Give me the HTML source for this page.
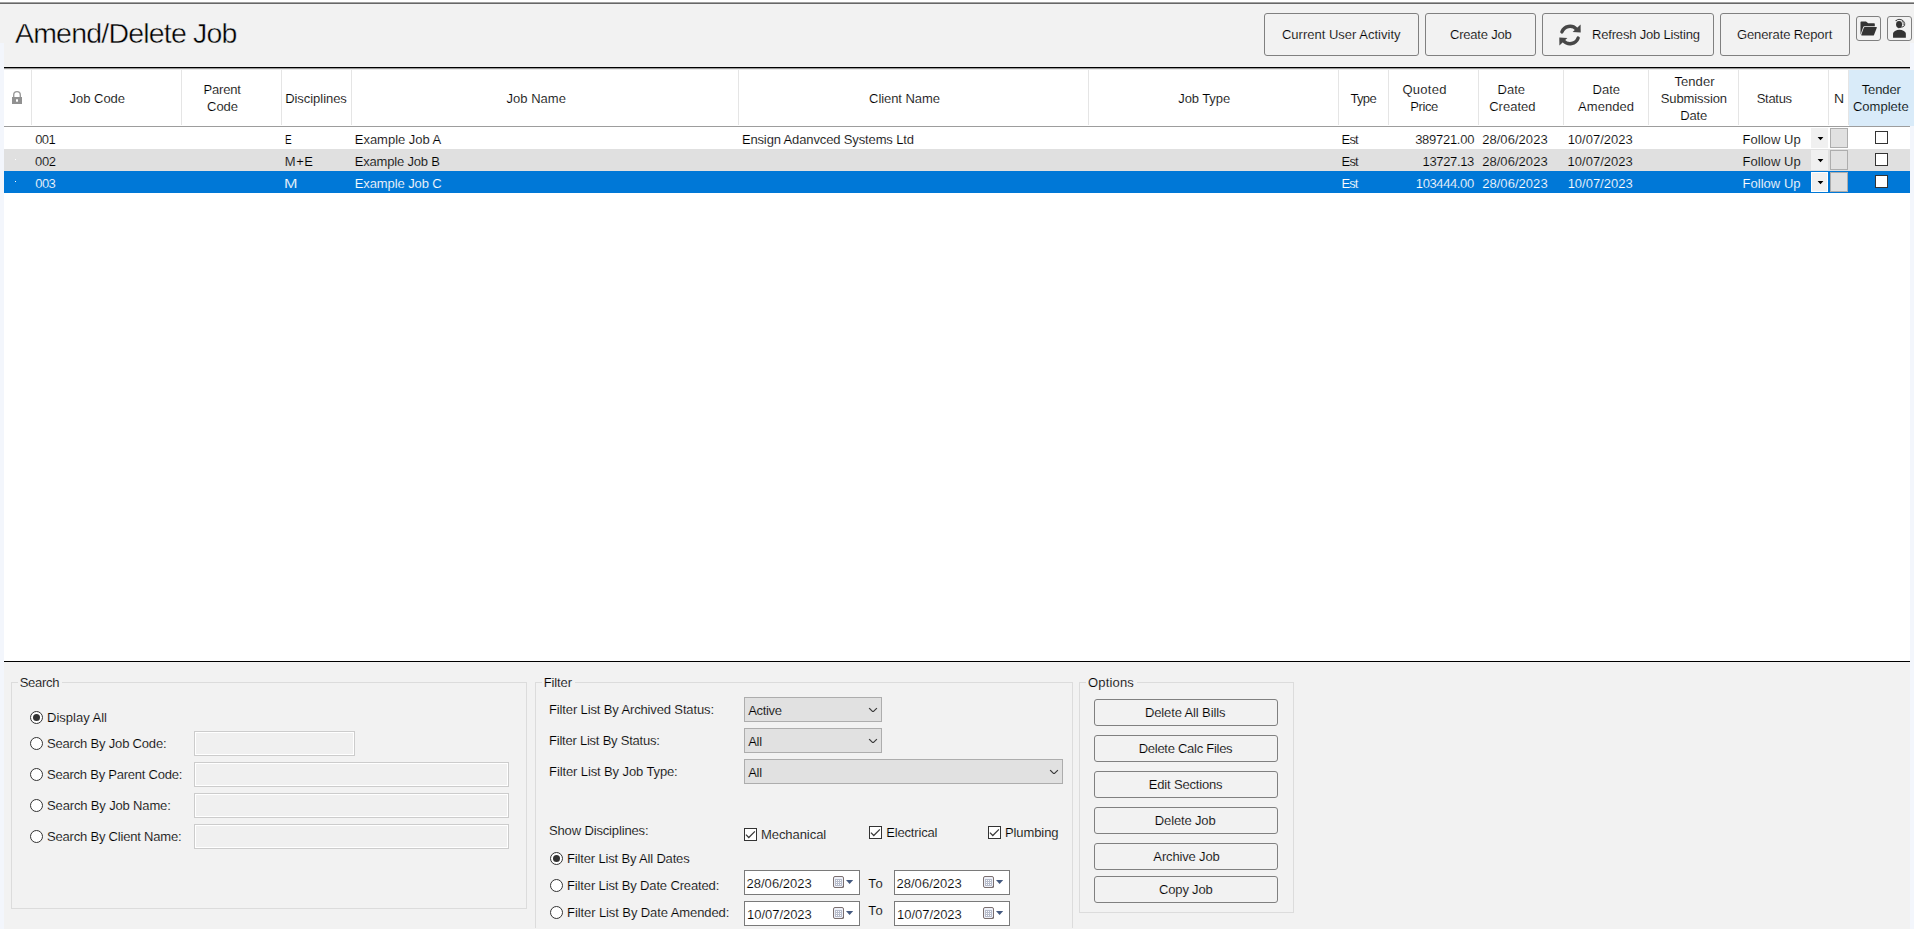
<!DOCTYPE html>
<html>
<head>
<meta charset="utf-8">
<title>Amend/Delete Job</title>
<style>
*{box-sizing:border-box;margin:0;padding:0}
html,body{width:1914px;height:929px;overflow:hidden}
body{position:relative;background:#f2f2f2;font-family:"Liberation Sans",sans-serif;font-size:13px;color:#000}
.a{position:absolute}
.t{position:absolute;white-space:nowrap;font-family:"Liberation Sans",sans-serif}
.btn{position:absolute;border:1px solid #808080;border-radius:3px;background:#f2f2f2}
.sep{position:absolute;top:70px;width:1px;height:55px;background:#e5e5e5}
.gb{position:absolute;border:1px solid #dcdcdc}
.gap{position:absolute;height:3px;background:#f2f2f2}
.inp{position:absolute;height:25px;border:1px solid #cccccc;background:#f0f0f0;box-shadow:inset 0 0 0 1px #fff}
.cmb{position:absolute;height:25px;border:1px solid #adadad;background:#e1e1e1}
.dp{position:absolute;width:116px;height:25px;border:1px solid #7a7a7a;background:#fff}
.rad{position:absolute;width:13px;height:13px;border:1px solid #333;border-radius:50%;background:#fff}
.rad.on::after{content:"";position:absolute;left:2px;top:2px;width:7px;height:7px;border-radius:50%;background:#333}
.chk{position:absolute;width:13px;height:13px;border:1px solid #333;background:#fff}
.dd{position:absolute;left:1811px;width:17px;height:20px;background:#f0f0f0}
.nb{position:absolute;left:1830px;width:18px;height:20px;background:#e1e1e1;border:1px solid #adadad}
svg{position:absolute;overflow:visible}
</style>
</head>
<body>
<!-- window top edge -->
<div class="a" style="left:0;top:0;width:1914px;height:2px;background:#fff"></div>
<div class="a" style="left:0;top:2px;width:1914px;height:1px;background:#a0a0a0"></div>
<div class="a" style="left:0;top:3px;width:1914px;height:1px;background:#676767"></div>
<!-- side strips -->
<div class="a" style="left:0;top:43px;width:4px;height:886px;background:#f3f6fc"></div>
<div class="a" style="left:1910px;top:43px;width:4px;height:886px;background:#f3f6fc"></div>

<!-- top buttons -->
<div class="btn" style="left:1264px;top:13px;width:155px;height:43px"></div>
<div class="btn" style="left:1425px;top:13px;width:111px;height:43px"></div>
<div class="btn" style="left:1542px;top:13px;width:172px;height:43px"></div>
<div class="btn" style="left:1720px;top:13px;width:130px;height:43px"></div>
<div class="btn" style="left:1856px;top:16px;width:25px;height:25px"></div>
<div class="btn" style="left:1887px;top:16px;width:25px;height:25px"></div>

<!-- refresh icon -->
<svg style="left:1558px;top:22.5px" width="24" height="24" viewBox="-12 -12 24 24">
 <g fill="none" stroke="#474747" stroke-width="3.4" stroke-linecap="round">
  <path d="M-8.1,-3.1 A8.7,8.7 0 0 1 6.4,-5.9"/>
  <path d="M8.1,3.1 A8.7,8.7 0 0 1 -6.4,5.9"/>
 </g>
 <g fill="#474747">
  <path d="M10.6,-10.6 L10.7,-2.5 L2.6,-2.9 Z"/>
  <path d="M-10.6,10.6 L-10.7,2.5 L-2.6,2.9 Z"/>
 </g>
</svg>
<!-- folder icon -->
<svg style="left:1856px;top:16px" width="25" height="25" viewBox="0 0 25 25">
 <path fill="#333" d="M4.5,6.2 Q4.5,5.4 5.3,5.4 L10,5.4 L12.2,7.35 L18.2,7.35 Q18.8,7.35 18.8,7.95 L18.8,10.15 L8.4,10.15 Q7.5,10.15 7.2,11 L4.5,18.7 Z"/>
 <path fill="#333" d="M8.7,11 L20.3,11 Q21.1,11 20.8,11.8 L18,19 Q17.8,19.6 17.1,19.6 L5.8,19.6 Q5,19.6 5.3,18.8 L7.9,11.6 Q8.1,11 8.7,11 Z"/>
</svg>
<!-- user icon -->
<svg style="left:1887px;top:16px" width="25" height="25" viewBox="0 0 25 25">
 <ellipse cx="12.05" cy="8.5" rx="3" ry="3.4" fill="#333"/>
 <path fill="#333" d="M11.2,11.5 L12.9,11.5 L11.8,12.6 Z"/>
 <path fill="#333" d="M6.05,21.8 L6.05,17.6 Q6.05,16 8,15 Q10.2,13.85 12.45,13.85 Q14.7,13.85 16.9,15 Q18.85,16 18.85,17.6 L18.85,21.8 Z"/>
 <path fill="none" stroke="#333" stroke-width="0.9" d="M9.1,4.6 Q10,3.5 12,3.35 Q15,3.2 16.6,5.2 Q18.3,7.6 17.6,9.6 Q16.5,11.2 13,11.3"/>
 <path fill="none" stroke="#333" stroke-width="0.6" d="M14.9,4.6 Q16.7,6.4 16.3,9.3"/>
 <circle cx="9.1" cy="4.6" r="0.7" fill="#333"/>
</svg>

<!-- table -->
<div class="a" style="left:4px;top:67px;width:1906px;height:595px;background:#fff;border-top:1px solid #000;border-bottom:1px solid #000"></div>
<div class="a" style="left:4px;top:68px;width:1906px;height:1px;background:#999"></div>
<div class="a" style="left:4px;top:69px;width:1906px;height:1px;background:#ebebeb"></div>
<div class="a" style="left:1849px;top:70px;width:65px;height:56px;background:#d9ebf9"></div>
<div class="sep" style="left:31px"></div>
<div class="sep" style="left:181px"></div>
<div class="sep" style="left:281px"></div>
<div class="sep" style="left:351px"></div>
<div class="sep" style="left:738px"></div>
<div class="sep" style="left:1088px"></div>
<div class="sep" style="left:1338px"></div>
<div class="sep" style="left:1388px"></div>
<div class="sep" style="left:1478px"></div>
<div class="sep" style="left:1563px"></div>
<div class="sep" style="left:1648px"></div>
<div class="sep" style="left:1738px"></div>
<div class="sep" style="left:1828px"></div>
<div class="sep" style="left:1848px"></div>
<div class="a" style="left:4px;top:126px;width:1906px;height:1px;background:#9d9d9d"></div>
<!-- rows -->
<div class="a" style="left:4px;top:149px;width:1906px;height:22px;background:#e0e0e0"></div>
<div class="a" style="left:4px;top:171px;width:1906px;height:22px;background:#0078d7"></div>
<!-- lock icon -->
<svg style="left:10px;top:89px" width="14" height="17" viewBox="0 0 14 17">
 <path fill="none" stroke="#9a9a9a" stroke-width="1.4" d="M3.7,8.5 L3.7,6 A3.3,3.4 0 0 1 10.3,6 L10.3,8.5"/>
 <rect x="2" y="8" width="10" height="7" fill="#919191"/>
 <rect x="6" y="10.3" width="2" height="2.4" fill="#fff"/>
</svg>
<!-- row widgets -->
<div class="dd" style="top:128px"></div><div class="nb" style="top:128px"></div><div class="chk" style="left:1875px;top:131px"></div>
<div class="dd" style="top:150px"></div><div class="nb" style="top:150px"></div><div class="chk" style="left:1875px;top:153px"></div>
<div class="dd" style="top:172px;border:1px solid #fff"></div><div class="nb" style="top:172px"></div><div class="chk" style="left:1875px;top:175px"></div>
<svg style="left:1811px;top:128px" width="17" height="64" viewBox="0 0 17 64">
 <path fill="#000" d="M6.6,9 L12.4,9 L9.5,12.2 Z M6.6,31 L12.4,31 L9.5,34.2 Z M6.6,53 L12.4,53 L9.5,56.2 Z"/>
</svg>
<div class="a" style="left:15px;top:159px;width:1px;height:1px;background:#fff"></div>
<div class="a" style="left:15px;top:181px;width:1px;height:1px;background:#fff"></div>

<!-- group boxes -->
<div class="gb" style="left:11px;top:682px;width:516px;height:227px"></div>
<div class="gap" style="left:18px;top:681px;width:44px"></div>
<div class="gb" style="left:535px;top:682px;width:538px;height:246px;border-bottom:none"></div>
<div class="gap" style="left:542px;top:681px;width:33px"></div>
<div class="gb" style="left:1079px;top:682px;width:215px;height:231px"></div>
<div class="gap" style="left:1086px;top:681px;width:51px"></div>

<!-- search panel -->
<div class="rad on" style="left:30px;top:711px"></div>
<div class="rad" style="left:30px;top:737px"></div>
<div class="rad" style="left:30px;top:768px"></div>
<div class="rad" style="left:30px;top:799px"></div>
<div class="rad" style="left:30px;top:830px"></div>
<div class="inp" style="left:194px;top:731px;width:161px"></div>
<div class="inp" style="left:194px;top:762px;width:315px"></div>
<div class="inp" style="left:194px;top:793px;width:315px"></div>
<div class="inp" style="left:194px;top:824px;width:315px"></div>

<!-- filter panel -->
<div class="cmb" style="left:744px;top:697px;width:138px"></div>
<div class="cmb" style="left:744px;top:728px;width:138px"></div>
<div class="cmb" style="left:744px;top:759px;width:319px"></div>
<svg style="left:0;top:0" width="1914" height="929" viewBox="0 0 1914 929">
 <g fill="none" stroke="#3c3c3c" stroke-width="1.15" stroke-linecap="square">
  <path d="M869.5,708.5 L872.5,711.5 L873.5,711.5 L876.5,708.5"/>
  <path d="M869.5,739.5 L872.5,742.5 L873.5,742.5 L876.5,739.5"/>
  <path d="M1050.5,770.5 L1053.5,773.5 L1054.5,773.5 L1057.5,770.5"/>
 </g>
</svg>
<div class="chk" style="left:744px;top:828px"></div>
<div class="chk" style="left:869px;top:826px"></div>
<div class="chk" style="left:988px;top:826px"></div>
<svg style="left:0;top:0" width="1914" height="929" viewBox="0 0 1914 929">
 <g fill="none" stroke="#3a3a3a" stroke-width="1.25">
  <path d="M745.9,834.6 L748.8,837.5 L754.9,831.4"/>
  <path d="M870.9,832.6 L873.8,835.5 L879.9,829.4"/>
  <path d="M989.9,832.6 L992.8,835.5 L998.9,829.4"/>
 </g>
</svg>
<div class="rad on" style="left:550px;top:852px"></div>
<div class="rad" style="left:550px;top:879px"></div>
<div class="rad" style="left:550px;top:906px"></div>
<div class="dp" style="left:744px;top:870px"></div>
<div class="dp" style="left:894px;top:870px"></div>
<div class="dp" style="left:744px;top:901px"></div>
<div class="dp" style="left:894px;top:901px"></div>
<!-- calendar icons -->
<svg style="left:0;top:0" width="1914" height="929" viewBox="0 0 1914 929">
 <g transform="translate(833,876)">
   <rect x="0.5" y="0.5" width="10" height="11" rx="1.5" fill="#edf0f8" stroke="#7b6f6f" stroke-width="1"/>
   <rect x="2" y="3" width="7" height="7" fill="#b7bccb"/>
   <path fill="#fff" d="M3,4h1v1h-1z M5,4h1v1h-1z M7,4h1v1h-1z M3,6h1v1h-1z M5,6h1v1h-1z M7,6h1v1h-1z M3,8h1v1h-1z M5,8h1v1h-1z M7,8h1v1h-1z"/>
   <path fill="#6e6464" d="M8.6,11.5 L11,9.2 L11,11 Q11,11.5 10.4,11.5 Z"/>
   <path fill="#44597f" d="M13,4 L20.2,4 L16.6,8 Z"/>
 </g>
 <g transform="translate(983,876)">
   <rect x="0.5" y="0.5" width="10" height="11" rx="1.5" fill="#edf0f8" stroke="#7b6f6f" stroke-width="1"/>
   <rect x="2" y="3" width="7" height="7" fill="#b7bccb"/>
   <path fill="#fff" d="M3,4h1v1h-1z M5,4h1v1h-1z M7,4h1v1h-1z M3,6h1v1h-1z M5,6h1v1h-1z M7,6h1v1h-1z M3,8h1v1h-1z M5,8h1v1h-1z M7,8h1v1h-1z"/>
   <path fill="#6e6464" d="M8.6,11.5 L11,9.2 L11,11 Q11,11.5 10.4,11.5 Z"/>
   <path fill="#44597f" d="M13,4 L20.2,4 L16.6,8 Z"/>
 </g>
 <g transform="translate(833,907)">
   <rect x="0.5" y="0.5" width="10" height="11" rx="1.5" fill="#edf0f8" stroke="#7b6f6f" stroke-width="1"/>
   <rect x="2" y="3" width="7" height="7" fill="#b7bccb"/>
   <path fill="#fff" d="M3,4h1v1h-1z M5,4h1v1h-1z M7,4h1v1h-1z M3,6h1v1h-1z M5,6h1v1h-1z M7,6h1v1h-1z M3,8h1v1h-1z M5,8h1v1h-1z M7,8h1v1h-1z"/>
   <path fill="#6e6464" d="M8.6,11.5 L11,9.2 L11,11 Q11,11.5 10.4,11.5 Z"/>
   <path fill="#44597f" d="M13,4 L20.2,4 L16.6,8 Z"/>
 </g>
 <g transform="translate(983,907)">
   <rect x="0.5" y="0.5" width="10" height="11" rx="1.5" fill="#edf0f8" stroke="#7b6f6f" stroke-width="1"/>
   <rect x="2" y="3" width="7" height="7" fill="#b7bccb"/>
   <path fill="#fff" d="M3,4h1v1h-1z M5,4h1v1h-1z M7,4h1v1h-1z M3,6h1v1h-1z M5,6h1v1h-1z M7,6h1v1h-1z M3,8h1v1h-1z M5,8h1v1h-1z M7,8h1v1h-1z"/>
   <path fill="#6e6464" d="M8.6,11.5 L11,9.2 L11,11 Q11,11.5 10.4,11.5 Z"/>
   <path fill="#44597f" d="M13,4 L20.2,4 L16.6,8 Z"/>
 </g>
</svg>

<!-- options panel -->
<div class="btn" style="left:1094px;top:699px;width:184px;height:27px"></div>
<div class="btn" style="left:1094px;top:735px;width:184px;height:27px"></div>
<div class="btn" style="left:1094px;top:771px;width:184px;height:27px"></div>
<div class="btn" style="left:1094px;top:807px;width:184px;height:27px"></div>
<div class="btn" style="left:1094px;top:843px;width:184px;height:27px"></div>
<div class="btn" style="left:1094px;top:876px;width:184px;height:27px"></div>

<!-- texts -->
<span class="t" style="left:14.97px;top:19.07px;font-size:28.5px;line-height:28.5px;letter-spacing:-0.798px;color:#000;-webkit-text-stroke:0.45px #f2f2f2">Amend/Delete Job</span>
<span class="t" style="left:1281.97px;top:28.00px;font-size:13px;line-height:13px;letter-spacing:0.004px;color:#000;-webkit-text-stroke:0.15px #f2f2f2">Current User Activity</span>
<span class="t" style="left:1450.01px;top:28.00px;font-size:13px;line-height:13px;letter-spacing:-0.214px;color:#000;-webkit-text-stroke:0.15px #f2f2f2">Create Job</span>
<span class="t" style="left:1592.06px;top:28.00px;font-size:13px;line-height:13px;letter-spacing:-0.187px;color:#000;-webkit-text-stroke:0.15px #f2f2f2">Refresh Job Listing</span>
<span class="t" style="left:1736.96px;top:28.00px;font-size:13px;line-height:13px;letter-spacing:-0.107px;color:#000;-webkit-text-stroke:0.15px #f2f2f2">Generate Report</span>
<span class="t" style="left:69.40px;top:92.00px;font-size:13px;line-height:13px;letter-spacing:0.006px;color:#000;-webkit-text-stroke:0.15px #ffffff">Job Code</span>
<span class="t" style="left:203.53px;top:83.00px;font-size:13px;line-height:13px;letter-spacing:-0.200px;color:#000;-webkit-text-stroke:0.15px #ffffff">Parent</span>
<span class="t" style="left:207.11px;top:100.00px;font-size:13px;line-height:13px;letter-spacing:-0.101px;color:#000;-webkit-text-stroke:0.15px #ffffff">Code</span>
<span class="t" style="left:285.13px;top:92.00px;font-size:13px;line-height:13px;letter-spacing:-0.039px;color:#000;-webkit-text-stroke:0.15px #ffffff">Disciplines</span>
<span class="t" style="left:506.51px;top:92.00px;font-size:13px;line-height:13px;letter-spacing:0.030px;color:#000;-webkit-text-stroke:0.15px #ffffff">Job Name</span>
<span class="t" style="left:869.11px;top:92.00px;font-size:13px;line-height:13px;letter-spacing:-0.075px;color:#000;-webkit-text-stroke:0.15px #ffffff">Client Name</span>
<span class="t" style="left:1178.26px;top:92.00px;font-size:13px;line-height:13px;letter-spacing:-0.088px;color:#000;-webkit-text-stroke:0.15px #ffffff">Job Type</span>
<span class="t" style="left:1350.55px;top:92.00px;font-size:13px;line-height:13px;letter-spacing:-0.706px;color:#000;-webkit-text-stroke:0.15px #ffffff">Type</span>
<span class="t" style="left:1402.44px;top:83.00px;font-size:13px;line-height:13px;letter-spacing:0.257px;color:#000;-webkit-text-stroke:0.15px #ffffff">Quoted</span>
<span class="t" style="left:1410.14px;top:100.00px;font-size:13px;line-height:13px;letter-spacing:-0.370px;color:#000;-webkit-text-stroke:0.15px #ffffff">Price</span>
<span class="t" style="left:1497.56px;top:83.00px;font-size:13px;line-height:13px;letter-spacing:0.025px;color:#000;-webkit-text-stroke:0.15px #ffffff">Date</span>
<span class="t" style="left:1489.21px;top:100.00px;font-size:13px;line-height:13px;letter-spacing:0.001px;color:#000;-webkit-text-stroke:0.15px #ffffff">Created</span>
<span class="t" style="left:1592.56px;top:83.00px;font-size:13px;line-height:13px;letter-spacing:0.025px;color:#000;-webkit-text-stroke:0.15px #ffffff">Date</span>
<span class="t" style="left:1578.09px;top:100.00px;font-size:13px;line-height:13px;letter-spacing:0.039px;color:#000;-webkit-text-stroke:0.15px #ffffff">Amended</span>
<span class="t" style="left:1674.55px;top:75.00px;font-size:13px;line-height:13px;letter-spacing:0.037px;color:#000;-webkit-text-stroke:0.15px #ffffff">Tender</span>
<span class="t" style="left:1660.73px;top:92.00px;font-size:13px;line-height:13px;letter-spacing:-0.097px;color:#000;-webkit-text-stroke:0.15px #ffffff">Submission</span>
<span class="t" style="left:1680.22px;top:109.00px;font-size:13px;line-height:13px;letter-spacing:-0.182px;color:#000;-webkit-text-stroke:0.15px #ffffff">Date</span>
<span class="t" style="left:1756.76px;top:92.00px;font-size:13px;line-height:13px;letter-spacing:-0.298px;color:#000;-webkit-text-stroke:0.15px #ffffff">Status</span>
<span class="t" style="left:1833.62px;top:92.00px;font-size:13px;line-height:13px;letter-spacing:0.000px;color:#000;-webkit-text-stroke:0.15px #ffffff;transform-origin:0 0;transform:scaleX(1.075)">N</span>
<span class="t" style="left:1861.66px;top:83.00px;font-size:13px;line-height:13px;letter-spacing:-0.103px;color:#000;-webkit-text-stroke:0.15px #d9ebf9">Tender</span>
<span class="t" style="left:1852.89px;top:100.00px;font-size:13px;line-height:13px;letter-spacing:0.031px;color:#000;-webkit-text-stroke:0.15px #d9ebf9">Complete</span>
<span class="t" style="left:35.13px;top:133.00px;font-size:13px;line-height:13px;letter-spacing:-0.599px;color:#000;-webkit-text-stroke:0.15px #ffffff">001</span>
<span class="t" style="left:284.73px;top:133.00px;font-size:13px;line-height:13px;letter-spacing:0.000px;color:#000;-webkit-text-stroke:0.15px #ffffff;transform-origin:0 0;transform:scaleX(0.775)">E</span>
<span class="t" style="left:354.81px;top:133.00px;font-size:13px;line-height:13px;letter-spacing:-0.026px;color:#000;-webkit-text-stroke:0.15px #ffffff">Example Job A</span>
<span class="t" style="left:741.88px;top:133.00px;font-size:13px;line-height:13px;letter-spacing:-0.134px;color:#000;-webkit-text-stroke:0.15px #ffffff">Ensign Adanvced Systems Ltd</span>
<span class="t" style="left:1341.53px;top:133.00px;font-size:13px;line-height:13px;letter-spacing:-0.787px;color:#000;-webkit-text-stroke:0.15px #ffffff">Est</span>
<span class="t" style="left:1415.15px;top:133.00px;font-size:13px;line-height:13px;letter-spacing:-0.275px;color:#000;-webkit-text-stroke:0.15px #ffffff">389721.00</span>
<span class="t" style="left:1482.15px;top:133.00px;font-size:13px;line-height:13px;letter-spacing:0.050px;color:#000;-webkit-text-stroke:0.15px #ffffff">28/06/2023</span>
<span class="t" style="left:1567.63px;top:133.00px;font-size:13px;line-height:13px;letter-spacing:-0.003px;color:#000;-webkit-text-stroke:0.15px #ffffff">10/07/2023</span>
<span class="t" style="left:1742.42px;top:133.00px;font-size:13px;line-height:13px;letter-spacing:0.061px;color:#000;-webkit-text-stroke:0.15px #ffffff">Follow Up</span>
<span class="t" style="left:35.10px;top:155.00px;font-size:13px;line-height:13px;letter-spacing:-0.409px;color:#000;-webkit-text-stroke:0.15px #e0e0e0">002</span>
<span class="t" style="left:284.87px;top:155.00px;font-size:13px;line-height:13px;letter-spacing:0.498px;color:#000;-webkit-text-stroke:0.15px #e0e0e0">M+E</span>
<span class="t" style="left:354.80px;top:155.00px;font-size:13px;line-height:13px;letter-spacing:-0.193px;color:#000;-webkit-text-stroke:0.15px #e0e0e0">Example Job B</span>
<span class="t" style="left:1341.52px;top:155.00px;font-size:13px;line-height:13px;letter-spacing:-0.783px;color:#000;-webkit-text-stroke:0.15px #e0e0e0">Est</span>
<span class="t" style="left:1422.55px;top:155.00px;font-size:13px;line-height:13px;letter-spacing:-0.347px;color:#000;-webkit-text-stroke:0.15px #e0e0e0">13727.13</span>
<span class="t" style="left:1482.15px;top:155.00px;font-size:13px;line-height:13px;letter-spacing:0.051px;color:#000;-webkit-text-stroke:0.15px #e0e0e0">28/06/2023</span>
<span class="t" style="left:1567.61px;top:155.00px;font-size:13px;line-height:13px;letter-spacing:-0.000px;color:#000;-webkit-text-stroke:0.15px #e0e0e0">10/07/2023</span>
<span class="t" style="left:1742.41px;top:155.00px;font-size:13px;line-height:13px;letter-spacing:0.062px;color:#000;-webkit-text-stroke:0.15px #e0e0e0">Follow Up</span>
<span class="t" style="left:35.29px;top:177.00px;font-size:13px;line-height:13px;letter-spacing:-0.631px;color:#fff;-webkit-text-stroke:0.15px #0078d7">003</span>
<span class="t" style="left:284.26px;top:177.00px;font-size:13px;line-height:13px;letter-spacing:0.000px;color:#fff;-webkit-text-stroke:0.15px #0078d7;transform-origin:0 0;transform:scaleX(1.244)">M</span>
<span class="t" style="left:354.76px;top:177.00px;font-size:13px;line-height:13px;letter-spacing:-0.096px;color:#fff;-webkit-text-stroke:0.15px #0078d7">Example Job C</span>
<span class="t" style="left:1341.55px;top:177.00px;font-size:13px;line-height:13px;letter-spacing:-0.943px;color:#fff;-webkit-text-stroke:0.15px #0078d7">Est</span>
<span class="t" style="left:1415.80px;top:177.00px;font-size:13px;line-height:13px;letter-spacing:-0.390px;color:#fff;-webkit-text-stroke:0.15px #0078d7">103444.00</span>
<span class="t" style="left:1482.15px;top:177.00px;font-size:13px;line-height:13px;letter-spacing:0.047px;color:#fff;-webkit-text-stroke:0.15px #0078d7">28/06/2023</span>
<span class="t" style="left:1567.64px;top:177.00px;font-size:13px;line-height:13px;letter-spacing:-0.007px;color:#fff;-webkit-text-stroke:0.15px #0078d7">10/07/2023</span>
<span class="t" style="left:1742.44px;top:177.00px;font-size:13px;line-height:13px;letter-spacing:0.043px;color:#fff;-webkit-text-stroke:0.15px #0078d7">Follow Up</span>
<span class="t" style="left:19.67px;top:676.00px;font-size:13px;line-height:13px;letter-spacing:-0.296px;color:#000;-webkit-text-stroke:0.15px #f2f2f2">Search</span>
<span class="t" style="left:47.09px;top:711.00px;font-size:13px;line-height:13px;letter-spacing:-0.006px;color:#000;-webkit-text-stroke:0.15px #f2f2f2">Display All</span>
<span class="t" style="left:47.04px;top:737.00px;font-size:13px;line-height:13px;letter-spacing:-0.185px;color:#000;-webkit-text-stroke:0.15px #f2f2f2">Search By Job Code:</span>
<span class="t" style="left:47.04px;top:768.00px;font-size:13px;line-height:13px;letter-spacing:-0.234px;color:#000;-webkit-text-stroke:0.15px #f2f2f2">Search By Parent Code:</span>
<span class="t" style="left:47.04px;top:799.00px;font-size:13px;line-height:13px;letter-spacing:-0.149px;color:#000;-webkit-text-stroke:0.15px #f2f2f2">Search By Job Name:</span>
<span class="t" style="left:47.04px;top:830.00px;font-size:13px;line-height:13px;letter-spacing:-0.200px;color:#000;-webkit-text-stroke:0.15px #f2f2f2">Search By Client Name:</span>
<span class="t" style="left:543.70px;top:676.00px;font-size:13px;line-height:13px;letter-spacing:-0.123px;color:#000;-webkit-text-stroke:0.15px #f2f2f2">Filter</span>
<span class="t" style="left:549.06px;top:703.00px;font-size:13px;line-height:13px;letter-spacing:-0.137px;color:#000;-webkit-text-stroke:0.15px #f2f2f2">Filter List By Archived Status:</span>
<span class="t" style="left:549.06px;top:734.00px;font-size:13px;line-height:13px;letter-spacing:-0.230px;color:#000;-webkit-text-stroke:0.15px #f2f2f2">Filter List By Status:</span>
<span class="t" style="left:549.06px;top:765.00px;font-size:13px;line-height:13px;letter-spacing:-0.112px;color:#000;-webkit-text-stroke:0.15px #f2f2f2">Filter List By Job Type:</span>
<span class="t" style="left:748.16px;top:704.00px;font-size:13px;line-height:13px;letter-spacing:-0.332px;color:#000;-webkit-text-stroke:0.15px #e1e1e1">Active</span>
<span class="t" style="left:748.16px;top:735.00px;font-size:13px;line-height:13px;letter-spacing:-0.275px;color:#000;-webkit-text-stroke:0.15px #e1e1e1">All</span>
<span class="t" style="left:748.16px;top:766.00px;font-size:13px;line-height:13px;letter-spacing:-0.275px;color:#000;-webkit-text-stroke:0.15px #e1e1e1">All</span>
<span class="t" style="left:548.98px;top:824.00px;font-size:13px;line-height:13px;letter-spacing:-0.143px;color:#000;-webkit-text-stroke:0.15px #f2f2f2">Show Disciplines:</span>
<span class="t" style="left:760.96px;top:828.00px;font-size:13px;line-height:13px;letter-spacing:-0.056px;color:#000;-webkit-text-stroke:0.15px #f2f2f2">Mechanical</span>
<span class="t" style="left:886.21px;top:826.00px;font-size:13px;line-height:13px;letter-spacing:-0.159px;color:#000;-webkit-text-stroke:0.15px #f2f2f2">Electrical</span>
<span class="t" style="left:1004.90px;top:826.00px;font-size:13px;line-height:13px;letter-spacing:-0.079px;color:#000;-webkit-text-stroke:0.15px #f2f2f2">Plumbing</span>
<span class="t" style="left:567.06px;top:852.00px;font-size:13px;line-height:13px;letter-spacing:-0.165px;color:#000;-webkit-text-stroke:0.15px #f2f2f2">Filter List By All Dates</span>
<span class="t" style="left:567.06px;top:879.00px;font-size:13px;line-height:13px;letter-spacing:-0.141px;color:#000;-webkit-text-stroke:0.15px #f2f2f2">Filter List By Date Created:</span>
<span class="t" style="left:567.06px;top:906.00px;font-size:13px;line-height:13px;letter-spacing:-0.090px;color:#000;-webkit-text-stroke:0.15px #f2f2f2">Filter List By Date Amended:</span>
<span class="t" style="left:746.46px;top:877.00px;font-size:13px;line-height:13px;letter-spacing:0.031px;color:#000;-webkit-text-stroke:0.15px #ffffff">28/06/2023</span>
<span class="t" style="left:896.46px;top:877.00px;font-size:13px;line-height:13px;letter-spacing:0.031px;color:#000;-webkit-text-stroke:0.15px #ffffff">28/06/2023</span>
<span class="t" style="left:747.06px;top:908.00px;font-size:13px;line-height:13px;letter-spacing:-0.036px;color:#000;-webkit-text-stroke:0.15px #ffffff">10/07/2023</span>
<span class="t" style="left:897.06px;top:908.00px;font-size:13px;line-height:13px;letter-spacing:-0.036px;color:#000;-webkit-text-stroke:0.15px #ffffff">10/07/2023</span>
<span class="t" style="left:868.31px;top:877.00px;font-size:13px;line-height:13px;letter-spacing:0.675px;color:#000;-webkit-text-stroke:0.15px #f2f2f2">To</span>
<span class="t" style="left:868.31px;top:904.00px;font-size:13px;line-height:13px;letter-spacing:0.675px;color:#000;-webkit-text-stroke:0.15px #f2f2f2">To</span>
<span class="t" style="left:1088.01px;top:676.00px;font-size:13px;line-height:13px;letter-spacing:0.178px;color:#000;-webkit-text-stroke:0.15px #f2f2f2">Options</span>
<span class="t" style="left:1144.95px;top:706.00px;font-size:13px;line-height:13px;letter-spacing:-0.126px;color:#000;-webkit-text-stroke:0.15px #f2f2f2">Delete All Bills</span>
<span class="t" style="left:1138.70px;top:742.00px;font-size:13px;line-height:13px;letter-spacing:-0.270px;color:#000;-webkit-text-stroke:0.15px #f2f2f2">Delete Calc Files</span>
<span class="t" style="left:1148.70px;top:778.00px;font-size:13px;line-height:13px;letter-spacing:-0.162px;color:#000;-webkit-text-stroke:0.15px #f2f2f2">Edit Sections</span>
<span class="t" style="left:1154.86px;top:814.00px;font-size:13px;line-height:13px;letter-spacing:-0.150px;color:#000;-webkit-text-stroke:0.15px #f2f2f2">Delete Job</span>
<span class="t" style="left:1153.36px;top:850.00px;font-size:13px;line-height:13px;letter-spacing:-0.153px;color:#000;-webkit-text-stroke:0.15px #f2f2f2">Archive Job</span>
<span class="t" style="left:1159.11px;top:883.00px;font-size:13px;line-height:13px;letter-spacing:-0.194px;color:#000;-webkit-text-stroke:0.15px #f2f2f2">Copy Job</span>
</body>
</html>
